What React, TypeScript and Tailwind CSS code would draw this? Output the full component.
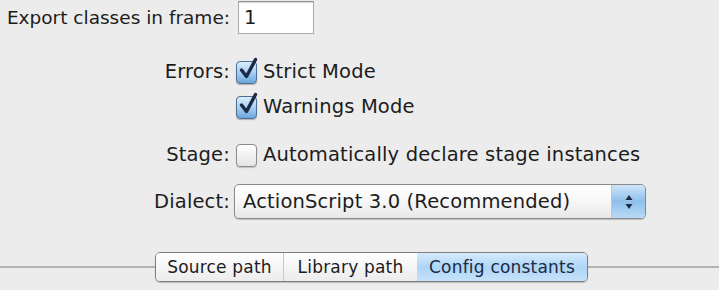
import React from "react";

function Check({ checked }: { checked: boolean }) {
  return (
    <div className="relative w-[21px] h-[23px] shrink-0">
      <div
        className={
          checked
            ? "absolute inset-0 rounded-[4px] border border-[#4d6f93] bg-gradient-to-b from-[#d8ecfb] via-[#a9d0f2] to-[#6aa6dc] shadow-[0_1px_1px_rgba(0,0,0,0.25)]"
            : "absolute inset-0 rounded-[4px] border border-[#8c8c8c] bg-gradient-to-b from-[#ffffff] to-[#e4e4e4] shadow-[0_1px_1px_rgba(0,0,0,0.2)]"
        }
      />
      {checked && (
        <svg className="absolute left-[2px] top-[-4px]" width="22" height="24" viewBox="0 0 22 24">
          <path d="M3.5 13 L8.5 19.5 L17.5 2.5" fill="none" stroke="#1b2a45" strokeWidth="3.4" strokeLinecap="round" strokeLinejoin="round" />
        </svg>
      )}
    </div>
  );
}

export default function App() {
  return (
    <div className="w-[719px] h-[290px] bg-[#ececec] overflow-hidden text-[#1c1c1c] font-['Lucida_Grande','DejaVu_Sans',sans-serif] text-[19.5px] tracking-[0.15px] leading-none">
      <div className="grid grid-cols-[230px_1fr] gap-x-[6px] items-center">
        <div className="h-[34px] flex items-center justify-end whitespace-nowrap pt-[2px] text-[18.5px] tracking-normal">Export classes in frame:</div>
        <div className="h-[34px] flex items-center">
          <div className="w-[76px] h-[33px] ml-[2px] bg-white border border-[#a9a9a9] border-t-[#8f8f8f] shadow-[inset_0_1px_1px_rgba(0,0,0,0.15)] flex items-end pl-[5px] pb-[5px]">
            1
          </div>
        </div>

        <div className="mt-[26px] h-[24px] flex items-center justify-end">Errors:</div>
        <div className="mt-[26px] h-[24px] flex items-center gap-[6px]">
          <Check checked />
          <span>Strict Mode</span>
        </div>

        <div className="mt-[11px] h-[24px]" />
        <div className="mt-[11px] h-[24px] flex items-center gap-[6px]">
          <Check checked />
          <span>Warnings Mode</span>
        </div>

        <div className="mt-[24px] h-[24px] flex items-center justify-end">Stage:</div>
        <div className="mt-[24px] h-[24px] flex items-center gap-[6px]">
          <Check checked={false} />
          <span>Automatically declare stage instances</span>
        </div>

        <div className="mt-[17px] h-[35px] flex items-center justify-end">Dialect:</div>
        <div className="mt-[17px] h-[35px] flex items-center">
          <div className="w-[412px] h-[35px] -ml-[2px] rounded-[5px] border border-[#8a8a8a] bg-gradient-to-b from-[#ffffff] via-[#f7f7f7] to-[#e8e8e8] shadow-[0_1px_1px_rgba(0,0,0,0.2)] flex items-stretch overflow-hidden">
            <div className="flex-1 flex items-center pl-[8px] whitespace-nowrap">ActionScript 3.0 (Recommended)</div>
            <div className="w-[34px] border-l border-[#b8c8d8] bg-gradient-to-b from-[#cfe5f9] via-[#8fc0ec] to-[#b9daf6] flex items-center justify-center">
              <svg width="10" height="18" viewBox="0 0 10 18">
                <path d="M5 2 L8.5 7 L1.5 7 Z" fill="#1f2b40" />
                <path d="M5 16 L8.5 11 L1.5 11 Z" fill="#1f2b40" />
              </svg>
            </div>
          </div>
        </div>
      </div>

      <div className="mt-[33px] flex items-center h-[30px]">
        <div className="w-[155px] h-[2px] bg-[#b3b3b3] shrink-0" />
        <div className="w-[433px] h-[30px] flex rounded-[5px] border border-[#7d7d7d] overflow-hidden text-[17px] tracking-[0.2px] shadow-[0_1px_1px_rgba(0,0,0,0.2)] shrink-0">
          <div className="w-[128px] flex items-center justify-center bg-gradient-to-b from-[#ffffff] to-[#ececec] border-r border-[#c8c8c8]">Source path</div>
          <div className="w-[133px] flex items-center justify-center bg-gradient-to-b from-[#ffffff] to-[#ececec]">Library path</div>
          <div className="flex-1 flex items-center justify-center bg-gradient-to-b from-[#d6ebfc] via-[#aed5f6] to-[#c5e2fa] text-[#1b2a45]">Config constants</div>
        </div>
        <div className="flex-1 h-[2px] bg-[#b3b3b3]" />
      </div>
    </div>
  );
}
